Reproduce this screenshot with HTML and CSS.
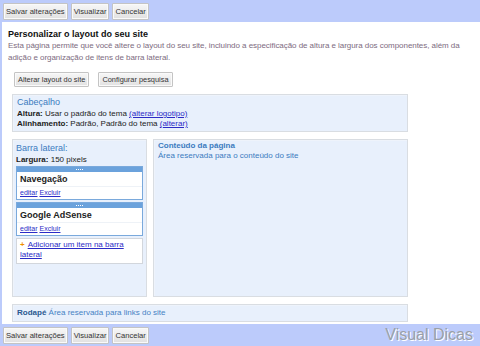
FILE: index.html
```html
<!DOCTYPE html>
<html lang="pt">
<head>
<meta charset="utf-8">
<link rel="stylesheet" href="styles.css">
</head>
<body>
<div class="bar top">
  <button class="btn">Salvar alterações</button>
  <button class="btn">Visualizar</button>
  <button class="btn">Cancelar</button>
</div>
<div class="main">
  <h1 class="title">Personalizar o layout do seu site</h1>
  <p class="desc">Esta página permite que você altere o layout do seu site, incluindo a especificação de altura e largura dos componentes, além da adição e organização de itens de barra lateral.</p>
  <div class="actions">
    <button class="btn">Alterar layout do site</button>
    <button class="btn">Configurar pesquisa</button>
  </div>
  <div class="layout">
    <div class="box header">
      <div class="box-title">Cabeçalho</div>
      <div class="line"><b>Altura:</b> Usar o padrão do tema <a href="#">(alterar logotipo)</a></div>
      <div class="line"><b>Alinhamento:</b> Padrão, Padrão do tema <a href="#">(alterar)</a></div>
    </div>
    <div class="cols">
      <div class="box sidebar">
        <div class="box-title">Barra lateral:</div>
        <div class="line"><b>Largura:</b> 150 pixels</div>
        <div class="widget">
          <div class="handle"><span></span><span></span><span></span><span></span></div>
          <div class="w-name">Navegação</div>
          <div class="w-links"><a href="#">editar</a> <a href="#">Excluir</a></div>
        </div>
        <div class="widget">
          <div class="handle"><span></span><span></span><span></span><span></span></div>
          <div class="w-name">Google AdSense</div>
          <div class="w-links"><a href="#">editar</a> <a href="#">Excluir</a></div>
        </div>
        <div class="add"><span class="plus">+</span><a href="#">Adicionar um item na barra lateral</a></div>
      </div>
      <div class="box content">
        <div class="c-title">Conteúdo da página</div>
        <div class="c-text">Área reservada para o conteúdo do site</div>
      </div>
    </div>
    <div class="box footer"><b>Rodapé</b> Área reservada para links do site</div>
  </div>
</div>
<div class="bar bottom">
  <button class="btn">Salvar alterações</button>
  <button class="btn">Visualizar</button>
  <button class="btn">Cancelar</button>
  <span class="mark">Visual Dicas</span>
</div>
</body>
</html>
```
FILE: styles.css
```css
* { box-sizing: border-box; }
html, body { margin: 0; padding: 0; }
body {
  width: 480px;
  height: 346px;
  background: #bccbfb;
  font-family: "Liberation Sans", Arial, sans-serif;
  font-size: 8px;
  color: #222;
  display: flex;
  flex-direction: column;
  overflow: hidden;
}
.bar {
  height: 22px;
  display: flex;
  align-items: center;
  gap: 3px;
  padding: 0 3px;
}
.btn {
  font-family: "Liberation Sans", Arial, sans-serif;
  font-size: 7.6px;
  color: #333;
  height: 17px;
  padding: 0 2px;
  border: 1px solid #c4c4c4;
  border-radius: 1px;
  background: linear-gradient(#f7f7f7, #e1e1e1);
  box-shadow: inset 0 0 0 1px #fafafa;
  cursor: default;
}
.main {
  height: 302px;
  margin-left: 2px;
  background: #fff;
  padding: 6px 0 0 6px;
}
.title {
  margin: 0;
  font-size: 9px;
  line-height: 12px;
  font-weight: bold;
  color: #111;
}
.desc {
  margin: 0;
  line-height: 12px;
  color: #7d6b80;
  font-size: 8px;
  letter-spacing: -0.05px;
  width: 472px;
}
.actions {
  display: flex;
  gap: 9px;
  margin: 8px 0 0 6px;
}
.actions .btn { height: 15px; padding: 0 3px; font-size: 7.4px; }
.layout {
  width: 396px;
  margin: 7px 0 0 4px;
  display: flex;
  flex-direction: column;
  gap: 7px;
}
.box {
  background: #e8f0fc;
  border: 1px solid #d9dde2;
  box-shadow: inset 1px 1px 0 #eef3fb;
}
.header {
  height: 38px;
  padding: 1px 4px;
}
.box-title {
  color: #3b7bbf;
  font-size: 9px;
  line-height: 13px;
}
.line { line-height: 10px; color: #222; }
a { color: #2b2bc6; text-decoration: underline; }
.cols {
  display: flex;
  gap: 6px;
  height: 158px;
}
.sidebar {
  width: 135px;
  padding: 2px 3px;
}
.sidebar .line { margin-bottom: 1px; }
.widget {
  background: #fff;
  border: 1px solid #7aa9dc;
  margin-bottom: 2px;
}
.handle {
  height: 5px;
  background: #6ba2dc;
  display: flex;
  justify-content: center;
  align-items: center;
  gap: 1px;
}
.handle span { width: 1px; height: 1px; background: #fff; }
.w-name {
  font-weight: bold;
  font-size: 9px;
  line-height: 14px;
  padding: 0 3px;
  border-bottom: 1px solid #eef2f7;
}
.w-links {
  font-size: 7px;
  line-height: 12px;
  padding: 0 3px;
}
.add {
  background: #fff;
  border: 1px solid #d2d6dc;
  height: 26px;
  padding: 1px 3px;
  line-height: 10px;
}
.plus { color: #f09000; font-weight: bold; margin-right: 3px; }
.content {
  flex: 1;
  padding: 1px 4px;
}
.c-title { color: #3b7bbf; font-weight: bold; line-height: 10px; }
.c-text { color: #3b7bbf; line-height: 10px; }
.footer {
  height: 18px;
  padding: 0 4px;
  line-height: 16px;
  color: #4682c4;
}
.footer b { color: #2a5890; }
.mark {
  margin-left: auto;
  margin-right: 4px;
  font-size: 16px;
  color: #9a9fa8;
  text-shadow: 1px 1px 0 #fff;
}
```
